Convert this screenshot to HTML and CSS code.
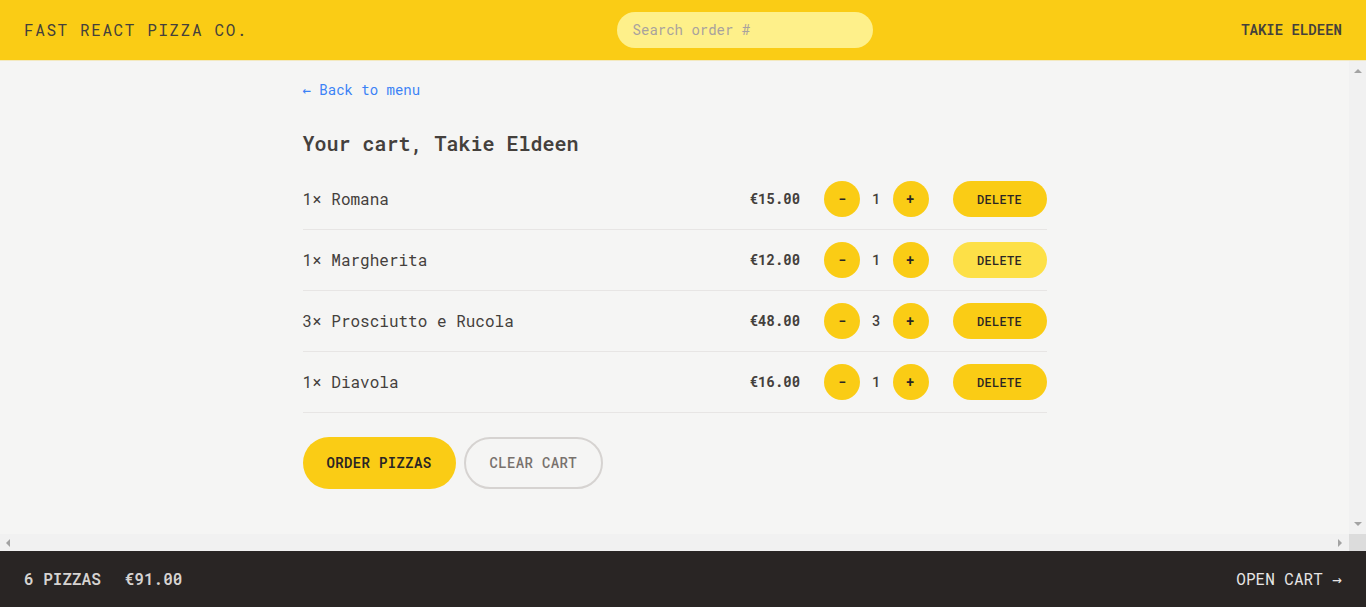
FILE: index.html
```html
<!DOCTYPE html>
<html lang="en">
<head>
<meta charset="utf-8">
<title>Fast React Pizza Co.</title>
<link rel="stylesheet" href="styles.css">
</head>
<body>
<div class="app">
  <header class="header">
    <a class="logo" href="#">Fast React Pizza Co.</a>
    <form class="search"><input class="search-input" placeholder="Search order #"></form>
    <div class="username">Takie Eldeen</div>
  </header>
  <div class="viewport">
    <div class="scroller">
      <main class="main">
        <div class="cart">
          <a class="back" href="#">&larr; Back to menu</a>
          <h2 class="title">Your cart, Takie Eldeen</h2>
          <ul class="items">
            <li class="item">
              <p class="item-name">1&times; Romana</p>
              <div class="item-actions">
                <p class="price">€15.00</p>
                <div class="qty">
                  <button class="btn round">-</button>
                  <span class="qty-num">1</span>
                  <button class="btn round">+</button>
                </div>
                <button class="btn small">Delete</button>
              </div>
            </li>
            <li class="item">
              <p class="item-name">1&times; Margherita</p>
              <div class="item-actions">
                <p class="price">€12.00</p>
                <div class="qty">
                  <button class="btn round">-</button>
                  <span class="qty-num">1</span>
                  <button class="btn round">+</button>
                </div>
                <button class="btn small hover">Delete</button>
              </div>
            </li>
            <li class="item">
              <p class="item-name">3&times; Prosciutto e Rucola</p>
              <div class="item-actions">
                <p class="price">€48.00</p>
                <div class="qty">
                  <button class="btn round">-</button>
                  <span class="qty-num">3</span>
                  <button class="btn round">+</button>
                </div>
                <button class="btn small">Delete</button>
              </div>
            </li>
            <li class="item">
              <p class="item-name">1&times; Diavola</p>
              <div class="item-actions">
                <p class="price">€16.00</p>
                <div class="qty">
                  <button class="btn round">-</button>
                  <span class="qty-num">1</span>
                  <button class="btn round">+</button>
                </div>
                <button class="btn small">Delete</button>
              </div>
            </li>
          </ul>
          <div class="cart-buttons">
            <button class="btn primary">Order pizzas</button>
            <button class="btn secondary">Clear cart</button>
          </div>
        </div>
      </main>
    </div>
    <div class="vbar" aria-hidden="true"><span class="arr arr-up"></span><span class="arr arr-down"></span></div>
    <div class="hbar" aria-hidden="true"><span class="arr arr-left"></span><span class="arr arr-right"></span></div>
    <div class="corner" aria-hidden="true"></div>
  </div>
  <footer class="footer">
    <p class="summary"><span class="count">6 pizzas</span><span>€91.00</span></p>
    <a class="open-cart" href="#">Open cart &rarr;</a>
  </footer>
</div>
</body>
</html>
```

FILE: styles.css
```css
* { box-sizing: border-box; }
html, body { margin: 0; padding: 0; height: 100%; }
body {
  font-family: "Roboto Mono", "DejaVu Sans Mono", "Liberation Mono", monospace;
  background: #f5f5f4;
  color: #44403c;
}
a { text-decoration: none; color: inherit; }
p { margin: 0; }
.app {
  display: grid;
  grid-template-rows: auto 1fr auto;
  height: 100vh;
}
.header {
  display: flex;
  align-items: center;
  justify-content: space-between;
  background: #facc15;
  padding: 12px 24px;
  border-bottom: 1px solid #f3e9c0;
  height: 61px;
}
.logo {
  font-size: 16px;
  line-height: 24px;
  letter-spacing: 0.1em;
  text-transform: uppercase;
  color: #44403c;
}
.search-input {
  display: block;
  width: 256px;
  height: 36px;
  border: none;
  outline: none;
  border-radius: 9999px;
  background: #fef08a;
  padding: 7px 16px 9px;
  font-family: inherit;
  font-size: 14px;
  line-height: 20px;
  color: #44403c;
}
.search-input::placeholder { color: #a8a29e; }
.username {
  font-size: 14px;
  line-height: 20px;
  font-weight: 600;
  text-transform: uppercase;
}

/* scroll viewport with classic scrollbars */
.viewport {
  display: grid;
  grid-template-columns: 1fr 17px;
  grid-template-rows: 1fr 17px;
  min-height: 0;
}
.scroller {
  overflow: hidden;
  min-height: 0;
  min-width: 0;
}
.vbar {
  background: #f1f1f1;
  display: flex;
  flex-direction: column;
  align-items: center;
  justify-content: space-between;
  padding: 8px 0 8px 1px;
}
.hbar {
  background: #f1f1f1;
  display: flex;
  align-items: center;
  justify-content: space-between;
  padding: 0 7px 0 6px;
}
.corner { background: #dcdcdc; }
.arr { display: block; width: 0; height: 0; }
.arr-up {
  border-left: 4px solid transparent;
  border-right: 4px solid transparent;
  border-bottom: 4px solid #a3a3a3;
}
.arr-down {
  border-left: 4px solid transparent;
  border-right: 4px solid transparent;
  border-top: 4px solid #a3a3a3;
}
.arr-left {
  border-top: 4px solid transparent;
  border-bottom: 4px solid transparent;
  border-right: 4px solid #a3a3a3;
}
.arr-right {
  border-top: 4px solid transparent;
  border-bottom: 4px solid transparent;
  border-left: 4px solid #a3a3a3;
}

.main {
  max-width: 768px;
  margin: 0 auto;
}
.cart { padding: 17px 12px 12px; }
.back {
  font-size: 14px;
  line-height: 20px;
  color: #3b82f6;
}
.title {
  margin: 29px 0 0;
  font-size: 20px;
  line-height: 28px;
  font-weight: 600;
}
.items {
  list-style: none;
  margin: 12px 0 0;
  padding: 0;
  border-bottom: 1px solid #e7e5e4;
}
.item {
  display: flex;
  align-items: center;
  justify-content: space-between;
  padding: 12px 0;
}
.item + .item { border-top: 1px solid #e7e5e4; }
.item-name { font-size: 16px; line-height: 24px; }
.item-actions {
  display: flex;
  align-items: center;
  gap: 24px;
}
.price { font-size: 14px; line-height: 20px; font-weight: 700; }
.qty { display: flex; align-items: center; gap: 12px; }
.qty-num { font-size: 14px; line-height: 20px; font-weight: 500; }
.btn {
  display: inline-block;
  border: none;
  border-radius: 9999px;
  background: #facc15;
  color: #292524;
  font-family: inherit;
  font-weight: 600;
  text-transform: uppercase;
  letter-spacing: 0.025em;
  cursor: pointer;
}
.round {
  width: 36px;
  height: 36px;
  padding: 0;
  font-size: 14px;
  line-height: 20px;
}
.small {
  width: 94px;
  height: 36px;
  padding: 0;
  font-size: 12px;
  line-height: 16px;
  font-weight: 500;
}
.small.hover { background: #fde047; }
.cart-buttons {
  margin-top: 24px;
  display: flex;
  gap: 8px;
}
.primary {
  padding: 16px 24px;
  font-size: 14px;
  line-height: 20px;
}
.secondary {
  background: transparent;
  border: 2px solid #d6d3d1;
  color: #78716c;
  padding: 14px 24px;
  font-size: 14px;
  line-height: 20px;
  font-weight: 500;
}
.footer {
  display: flex;
  align-items: center;
  justify-content: space-between;
  background: #292524;
  color: #e7e5e4;
  padding: 16px 24px;
  font-size: 16px;
  line-height: 24px;
  text-transform: uppercase;
}
.summary {
  display: flex;
  gap: 24px;
  font-weight: 600;
  color: #d6d3d1;
}
.open-cart { color: #e7e5e4; }
```
